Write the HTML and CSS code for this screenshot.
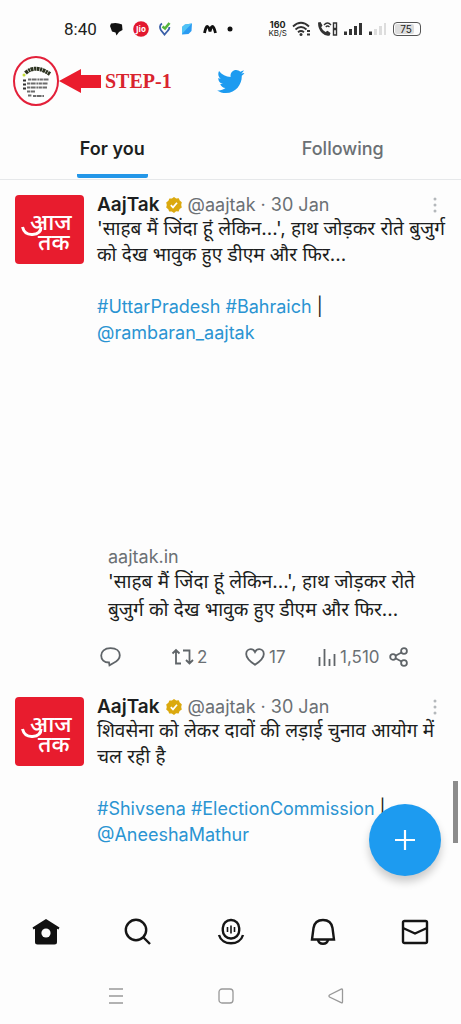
FILE: index.html
```
<!DOCTYPE html>
<html lang="hi">
<head>
<meta charset="utf-8">
<meta name="viewport" content="width=device-width, initial-scale=1">
<title>Home</title>
<link rel="stylesheet" href="styles.css">
</head>
<body>
<svg class="defs" aria-hidden="true">
  <symbol id="badge" viewBox="0 0 16 16">
    <path d="M8 0l2.2 1.4 2.6-.2.9 2.4 2.1 1.6L15.200 8l.6 2.600-2.200 1.500-1 2.300-2.500-.1L8 16l-2.200-1.500-2.600.1-.9-2.400-2.100-1.600L.8 8 .2 5.400l2.200-1.600 1-2.400 2.500.1z" fill="#dba90e"/>
    <path d="M4.800 8.200L7 10.400l4-4.600" fill="none" stroke="#fff" stroke-width="1.700"/>
  </symbol>
  <symbol id="dots" viewBox="0 0 4 16">
    <g fill="#b4b8bb"><circle cx="2" cy="2" r="1.500"/><circle cx="2" cy="8" r="1.500"/><circle cx="2" cy="14" r="1.500"/></g>
  </symbol>
</svg>

<div class="status">
  <span class="time">8:40</span>
  <div class="apps">
    <svg width="13" height="14" viewBox="0 0 13 14"><path d="M1 1.500q6-1.500 11 1l.5 5.500-3.500 2-2.500 3.500-1-3L2 9.500 0 4z" fill="#111"/></svg>
    <svg width="16" height="16" viewBox="0 0 16 16"><circle cx="8" cy="8" r="7.800" fill="#e2182f"/><text class="jio" x="8" y="11" text-anchor="middle">Jio</text></svg>
    <svg width="12" height="14" viewBox="0 0 12 14"><path d="M3 1.500C.5 3 .5 6 2 8.200L5.500 12.500 9 8.500Q10.500 7 10.300 5" fill="none" stroke="#3a5fa8" stroke-width="1.800"/><path d="M3.500 4.500l2.500 2L10.500 1" fill="none" stroke="#54b43c" stroke-width="2.600"/></svg>
    <svg width="12" height="12" viewBox="0 0 12 12"><path d="M4 1.500L11 .5 10.500 8 7.500 11 1 11.500 1 4z" fill="#2b9bf2"/><path d="M4 1.500L11 .5 5.500 6 1 11 1 4z" fill="#50c3f5"/></svg>
    <svg width="14" height="12" viewBox="0 0 14 12"><path d="M1.500 10Q3 3 4.500 3.500T7 8.500q1-5 2.500-5t3 6.500" fill="none" stroke="#111" stroke-width="2.800"/></svg>
    <svg width="6" height="6" viewBox="0 0 6 6"><circle cx="3" cy="3" r="2.500" fill="#111"/></svg>
  </div>
  <div class="system">
    <span class="speed"><b>160</b><span>KB/S</span></span>
    <svg width="20" height="16" viewBox="0 0 20 16"><g fill="none" stroke="#333" stroke-width="1.800"><path d="M1 5.500Q9 -2 17 5.500M3.500 8.500Q9 3.500 14.500 8.500M6 11.300Q9 8.800 12 11.300"/></g><circle cx="9" cy="13.500" r="1.500" fill="#333"/><path d="M15 9h3v2h-3zM15 12.500h3v2h-3z" fill="#333"/></svg>
    <svg width="21" height="16" viewBox="0 0 21 16"><path d="M1 1.500l2.500-.5 2 3.500-1.300 1.800Q5.500 9.500 8.500 11l2-1.200 3 2.200-.8 2.500Q9 15.800 5 12T1 1.500z" fill="#333"/><path d="M7 4Q10.500 0 14 4M8.800 6Q10.500 4 12.500 6" fill="none" stroke="#333" stroke-width="1.300"/><path d="M16.500 2h3v5.500h-3zM16.500 8.500h3V14h-3z" fill="none" stroke="#333" stroke-width="1.400"/></svg>
    <svg width="20" height="14" viewBox="0 0 20 14"><path d="M1 9.500h3V13H1zM6 7h3v6H6zM11 4h3v9h-3zM16 1h3v12h-3z" fill="#333"/></svg>
    <svg width="20" height="14" viewBox="0 0 20 14"><path d="M1 9.500h3V13H1z" fill="#333"/><path d="M6 7h3v6H6zM11 4h3v9h-3zM16 1h2v12h-2z" fill="#ddd"/></svg>
    <span class="battery"><span>75</span></span>
  </div>
</div>

<header class="topbar">
  <div class="step">
    <button class="profile" aria-label="Profile">
      <svg width="46" height="50" viewBox="0 0 46 50"><ellipse cx="23" cy="25" rx="22" ry="24" fill="#fefefe" stroke="#e3203a" stroke-width="2"/>
      <path d="M12.500 17Q22 8 37 18" fill="none" stroke="#2c321f" stroke-width="4" stroke-dasharray="3 .6 2 .5"/><circle cx="11" cy="19" r="1.500" fill="#c3dc36"/>
      <path d="M10 24.500h3M10 28.500h3M10 32.500h3" stroke="#333" stroke-width="1.800"/><path d="M15 23.500h21M14 27.500h21M14 31.500h20M14 35.500h8M15 39.500h4M20 40h11" stroke="#6d6d6d" stroke-width="2" stroke-dasharray="3 .6 5 .8 2 .5"/></svg>
    </button>
    <svg class="arrow" width="42" height="26" viewBox="0 0 42 26"><path d="M0 13L22 1v6h20v13H22v5z" fill="#ea1c2d"/></svg>
    <strong>STEP-1</strong>
  </div>
  <svg class="bird" width="29" height="25" viewBox="0 2 24 20" preserveAspectRatio="none"><path fill="#1d9bf0" d="M23.643 4.937c-.835.37-1.732.62-2.675.733.962-.576 1.700-1.490 2.048-2.578-.9.534-1.897.922-2.958 1.130-.85-.904-2.060-1.470-3.400-1.470-2.572 0-4.658 2.086-4.658 4.660 0 .364.042.718.120 1.060-3.873-.195-7.304-2.050-9.602-4.868-.4.690-.630 1.490-.630 2.342 0 1.616.823 3.043 2.072 3.878-.764-.025-1.482-.234-2.110-.583v.060c0 2.257 1.605 4.140 3.737 4.568-.392.106-.803.162-1.227.162-.3 0-.593-.028-.877-.082.593 1.850 2.313 3.198 4.352 3.234-1.595 1.250-3.604 1.995-5.786 1.995-.376 0-.747-.022-1.112-.065 2.062 1.323 4.510 2.093 7.140 2.093 8.570 0 13.255-7.098 13.255-13.254 0-.2-.005-.402-.014-.602.910-.658 1.700-1.477 2.323-2.410z"/></svg>
</header>

<nav class="tabs">
  <button class="tab active"><span>For you</span></button>
  <button class="tab"><span>Following</span></button>
</nav>

<main class="feed">
  <article class="tweet">
    <svg class="avatar" viewBox="0 0 69 69" role="img"><rect width="69" height="69" rx="4" fill="#e81c2e"/><text class="logo-text"><tspan x="15" y="35">आज</tspan><tspan x="23" y="55">तक</tspan></text><path d="M7.500 32q2 8 10 7.500Q26 39 26 32" class="logo-line"/></svg>
    <div class="content">
      <div class="byline"><strong>AajTak</strong><svg class="badge"><use href="#badge"/></svg><span>@aajtak · 30 Jan</span><button class="more" aria-label="More"><svg width="4" height="16"><use href="#dots"/></svg></button></div>
      <p>'साहब मैं जिंदा हूं लेकिन...', हाथ जोड़कर रोते बुजुर्ग को देख भावुक हुए डीएम और फिर...</p>
      <p class="tags"><a href="#">#UttarPradesh</a> <a href="#">#Bahraich</a> |<br><a href="#">@rambaran_aajtak</a></p>
      <div class="card">
        <div class="media"></div>
        <div class="domain">aajtak.in</div>
        <p>'साहब मैं जिंदा हूं लेकिन...', हाथ जोड़कर रोते बुजुर्ग को देख भावुक हुए डीएम और फिर...</p>
      </div>
      <div class="actions">
        <button aria-label="Reply"><svg width="21" height="20" viewBox="0 0 21 20"><path d="M9 15.500C4 15.500 1.200 12.500 1.200 8.500S4.500 1.200 10.500 1.200s9.300 3 9.300 7c0 4-3.300 6.300-6.300 7.800l-4 2.300z"/></svg></button>
        <button><svg width="24" height="18" viewBox="0 0 24 18"><path d="M1.500 5.500L5 2l3.500 3.500M5 2.500V15.500h5M12 2.500h6.500v13M15 12l3.500 3.500L22 12"/></svg>2</button>
        <button><svg width="20" height="18" viewBox="0 0 20 18"><path d="M10 16.800C5 13.500 1.200 10 1.200 6 1.200 3 3.500 1.200 5.800 1.200 7.800 1.200 9.200 2.500 10 4c.8-1.500 2.200-2.800 4.200-2.800 2.300 0 4.600 1.800 4.600 4.800 0 4-3.800 7.500-8.800 10.800z"/></svg><span class="count">17</span></button>
        <button><svg width="18" height="18" viewBox="0 0 18 18"><path d="M1.500 9v9M6.500 1v17M11.500 11v7M16.500 6v12"/></svg><span class="count">1,510</span></button>
        <button aria-label="Share"><svg width="20" height="20" viewBox="0 0 20 20"><circle cx="4" cy="10" r="2.800"/><circle cx="15" cy="4" r="2.900"/><circle cx="15" cy="16" r="2.900"/><path d="M6.500 8.700l6-3.200M6.500 11.300l6 3.200"/></svg></button>
      </div>
    </div>
  </article>

  <article class="tweet">
    <svg class="avatar" viewBox="0 0 69 69" role="img"><rect width="69" height="69" rx="4" fill="#e81c2e"/><text class="logo-text"><tspan x="15" y="35">आज</tspan><tspan x="23" y="55">तक</tspan></text><path d="M7.500 32q2 8 10 7.500Q26 39 26 32" class="logo-line"/></svg>
    <div class="content">
      <div class="byline"><strong>AajTak</strong><svg class="badge"><use href="#badge"/></svg><span>@aajtak · 30 Jan</span><button class="more" aria-label="More"><svg width="4" height="16"><use href="#dots"/></svg></button></div>
      <p>शिवसेना को लेकर दावों की लड़ाई चुनाव आयोग में चल रही है</p>
      <p class="tags"><a href="#">#Shivsena</a> <a href="#">#ElectionCommission</a> |<br><a href="#">@AneeshaMathur</a></p>
    </div>
  </article>
  <div class="scroll"></div>
  <button class="compose" aria-label="Compose"><svg width="22" height="22" viewBox="0 0 22 22"><path d="M11 1v20M1 11h20" stroke="#fff" stroke-width="2.200"/></svg></button>
</main>

<nav class="bottom">
  <button aria-label="Home"><svg width="30" height="28" viewBox="0 0 30 28"><path d="M15 1L1.500 9.500l1 2L4 10.800V24q0 2.500 2.500 2.500h17Q26 26.500 26 24V10.800l1.500.7 1-2z" fill="#111"/><circle cx="15" cy="15" r="4.600" fill="#fdfdfd"/></svg></button>
  <button aria-label="Search"><svg width="28" height="28" viewBox="0 0 28 28" class="line"><circle cx="12" cy="12" r="10.200"/><path d="M19 19l7 7"/></svg></button>
  <button aria-label="Spaces"><svg width="28" height="28" viewBox="0 0 28 28" class="line"><rect x="5.800" y="2" width="16.400" height="18.500" rx="8"/><path d="M2 17c3 11 21 11 24 0"/><path d="M10.500 9v5M14 7.500v8M17.500 9v5" stroke-width="1.600"/></svg></button>
  <button aria-label="Notifications"><svg width="26" height="28" viewBox="0 0 26 28" class="line"><path d="M2 21.500L3.500 10C4.500 4 8 2 13 2s8.500 2 9.500 8L24 21.500zM8 22c1 5 9 5 10 0"/></svg></button>
  <button aria-label="Messages"><svg width="28" height="26" viewBox="0 0 28 26" class="line"><rect x="2" y="2" width="24" height="22" rx="1.500"/><path d="M2 9l12 5.500L26 9"/></svg></button>
</nav>

<div class="sysnav">
  <button aria-label="Recents"><svg width="16" height="16" viewBox="0 0 16 16"><path d="M1 1h14M1 8h14M1 15h14"/></svg></button>
  <button aria-label="Home screen"><svg width="16" height="16" viewBox="0 0 16 16"><rect x="1" y="1" width="14" height="14" rx="3"/></svg></button>
  <button aria-label="Back"><svg width="16" height="16" viewBox="0 0 16 16"><path d="M14.500 2v12q0 1.300-1.300.7L1.500 9q-1-1 0-2L13.200 1.200q1.300-.6 1.300.8z"/></svg></button>
</div>
</body>
</html>
```
FILE: styles.css
```
* { box-sizing: border-box; }

body {
  margin: 0;
  min-height: 100vh;
  display: flex;
  flex-direction: column;
  background: #fdfdfd;
  color: #1c1e20;
  font-family: Inter, "Noto Sans", "Noto Sans Devanagari", sans-serif;
  font-size: 18px;
}

svg { display: block; flex: none; }
p { margin: 0; font-size: 19px; }
a { color: #2a94d2; text-decoration: none; }
button {
  padding: 0;
  border: 0;
  background: none;
  color: inherit;
  font: inherit;
}
.defs { width: 0; height: 0; position: absolute; }

.status {
  height: 52px;
  padding: 6px 40px 0 64px;
  display: flex;
  align-items: center;
}
.time { width: 46px; font-family: Roboto, sans-serif; font-size: 17px; }
.apps { display: flex; align-items: center; gap: 10px; }
.system { margin-left: auto; display: flex; align-items: center; gap: 5px; }
.speed {
  display: flex;
  flex-direction: column;
  align-items: center;
  font-size: 9px;
  line-height: 8px;
}
.speed span { font-size: 8px; }
.jio { font: bold 8px "Open Sans", sans-serif; fill: #fff; }
.battery {
  width: 28px;
  height: 14px;
  padding: 1px;
  border: 1px solid #555;
  border-radius: 4px;
  font-size: 10px;
  line-height: 10px;
  text-align: center;
}
.battery span { display: block; width: 19px; padding-left: 3px; background: #ddd; border-radius: 2px; }

.topbar {
  height: 58px;
  padding: 0 13px;
  display: grid;
  grid-template-columns: 1fr auto 1fr;
  align-items: center;
}
.step { display: flex; align-items: center; }
.step strong {
  margin-left: 4px;
  color: #d9232e;
  font: bold 20px "Liberation Serif", serif;
}

.tabs {
  height: 70px;
  display: flex;
  border-bottom: 1px solid #e6e8ea;
}
.tab {
  flex: 1;
  display: flex;
  justify-content: center;
  color: #6b7074;
  font-weight: 500;
}
.tab:first-child { padding-right: 6px; }
.tab:last-child { padding-right: 6px; }
.tab span { height: 68px; padding: 9px 3px 0; line-height: 60px; }
.tab.active { color: #1c1e20; font-weight: 600; }
.tab.active span { border-bottom: 4px solid #2497e8; border-radius: 2px; }

.feed { position: relative; flex: 1; padding-top: 8px; }
.tweet { padding: 6px 10px 0 15px; display: flex; gap: 13px; }
.avatar { width: 69px; height: 69px; margin-top: 1px; }
.logo-text { font: 500 23px "Noto Sans", "Noto Sans Devanagari", sans-serif; fill: #fff; }
.logo-line { fill: none; stroke: #fff; stroke-width: 3; }
.content { flex: 1; min-width: 0; line-height: 26px; }
.byline {
  height: 22px;
  display: flex;
  align-items: center;
  gap: 6px;
  color: #6b7074;
}
.byline strong { color: #1c1e20; font-size: 19px; font-weight: 600; }
.badge { width: 16px; height: 16px; }
.more { margin: 0 14px 0 auto; }
.tags { margin-top: 26px; font-size: 18px; }

.card { padding: 0 11px; }
.card p { line-height: 28px; }
.media { height: 200px; }
.domain { line-height: 22px; color: #6b7074; }

.actions {
  height: 66px;
  padding-left: 3px;
  display: grid;
  grid-template-columns: 71fr 74fr 73fr 71fr 62fr;
  align-items: center;
  color: #6b7074;
  font-size: 17px;
}
.actions button { display: flex; align-items: center; gap: 2px; }
.actions svg { fill: none; stroke: #5f6468; stroke-width: 1.800; }
.count { margin-left: 2px; }

.compose {
  position: absolute;
  right: 20px;
  bottom: 20px;
  width: 72px;
  height: 72px;
  border-radius: 50%;
  display: grid;
  place-items: center;
  background: #1d9bf0;
  box-shadow: 0 6px 8px rgba(0, 0, 0, .2);
}
.scroll {
  position: absolute;
  right: 3px;
  bottom: 53px;
  width: 5px;
  height: 62px;
  background: #8c8c8c;
}

.bottom { height: 72px; display: flex; }
.bottom button { flex: 1; display: grid; place-items: center; }
.line { fill: none; stroke: #151515; stroke-width: 2.400; }

.sysnav {
  height: 56px;
  padding: 0 70px 0 61px;
  display: flex;
}
.sysnav button { flex: 1; display: grid; place-items: center; }
.sysnav svg { fill: none; stroke: #999; stroke-width: 1.300; }
```
